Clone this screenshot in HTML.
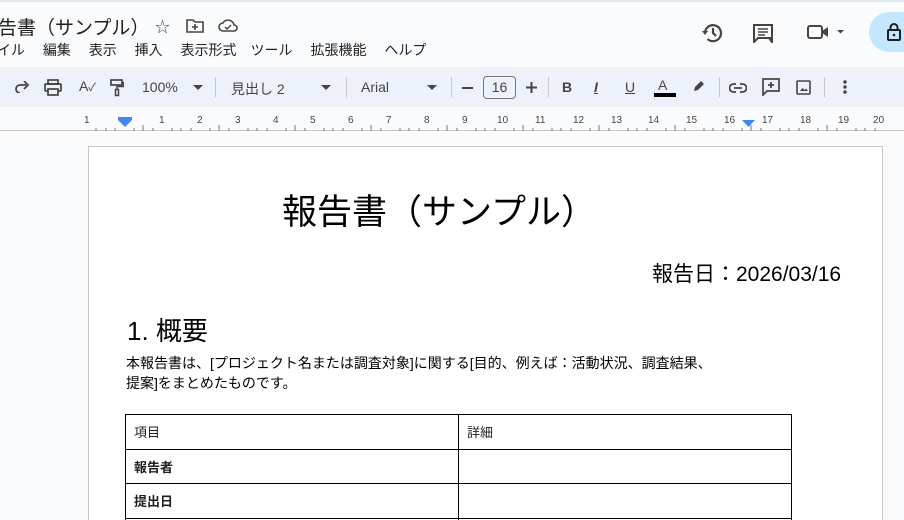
<!DOCTYPE html>
<html style="height:520px;overflow:hidden"><head><meta charset="utf-8"><style>
*{margin:0;padding:0;box-sizing:border-box}
body{width:904px;height:520px;overflow:hidden;background:#f9fbfd;font-family:"Liberation Sans","Noto Sans CJK JP",sans-serif;position:relative;color:#1f1f1f}
.a{position:absolute;white-space:nowrap}
.tb{position:absolute;left:0;top:67px;width:904px;height:40px;background:#edf2fa}
.sep{position:absolute;top:77px;width:1px;height:20px;background:#c7c7c7}
svg{position:absolute}
.page{position:absolute;left:88px;top:146px;width:795px;height:374px;background:#fff;border:1px solid #c7c7c7;border-bottom:none}
table{position:absolute;left:125px;top:414px;border-collapse:collapse;font-size:13px}
td{border:1px solid #000;height:34.5px;padding:0 8px;vertical-align:middle}
.r{font-size:10px;color:#444;position:absolute;top:115px}
</style></head><body>
<div style="position:absolute;left:0;top:0;width:904px;height:2px;background:#e3e7ee"></div>
<div class="a" style="left:-2px;top:13px;font-size:19px;color:#1f1f1f">告書（サンプル）</div>
<div class="a" style="left:155px;top:16px;font-size:15px;color:#444">☆</div>
<svg style="left:186px;top:18px" width="18" height="15" viewBox="0 0 18 15"><path d="M1 2h6l2 2h8v10H1z" fill="none" stroke="#444" stroke-width="1.6"/><path d="M9 6v6M6 9h6" stroke="#444" stroke-width="1.6"/></svg>
<svg style="left:218px;top:18px" width="20" height="14" viewBox="0 0 20 14"><path d="M5 13a4 4 0 0 1 0-8 6 6 0 0 1 11 2 3 3 0 0 1 0 6z" fill="none" stroke="#444" stroke-width="1.6"/><path d="M7 9l2 2 4-4" fill="none" stroke="#444" stroke-width="1.5"/></svg>
<div class="a" style="left:-3px;top:40px;font-size:14px;color:#1f1f1f">イル　 編集　 表示　 挿入　 表示形式　ツール　 拡張機能　 ヘルプ</div>
<svg style="left:701px;top:22px" width="24" height="22" viewBox="0 0 24 22"><path d="M4 11a8 8 0 1 1 2.5 6" fill="none" stroke="#444" stroke-width="2.2"/><path d="M1 9l3 4 3-4z" fill="#444"/><path d="M12 6v5l3 3" fill="none" stroke="#444" stroke-width="2.2"/></svg>
<svg style="left:752px;top:23px" width="22" height="20" viewBox="0 0 22 20"><path d="M2 2h18v13H6l-4 4z M20 15v4l-3-4" fill="none" stroke="#444" stroke-width="2"/><path d="M6 6h10M6 9h10M6 12h7" stroke="#444" stroke-width="1.6"/></svg>
<svg style="left:806px;top:23px" width="42" height="18" viewBox="0 0 42 18"><rect x="2" y="3" width="14" height="12" rx="2" fill="none" stroke="#444" stroke-width="2"/><path d="M16 8l6-4v10l-6-4" fill="#444"/><path d="M31 7h7l-3.5 3.5z" fill="#444"/></svg>
<div style="position:absolute;left:869px;top:12px;width:60px;height:40px;border-radius:20px;background:#c2e7ff"></div>
<svg style="left:887px;top:23px" width="14" height="18" viewBox="0 0 14 18"><rect x="1" y="7" width="12" height="10" rx="1" fill="none" stroke="#1f1f1f" stroke-width="2"/><path d="M3.5 7V4.5a3.5 3.5 0 0 1 7 0V7" fill="none" stroke="#1f1f1f" stroke-width="2"/><circle cx="7" cy="12" r="1.3" fill="#1f1f1f"/></svg>

<div class="tb"></div>
<svg style="left:14px;top:81px" width="16" height="12" viewBox="0 0 16 12"><path d="M12 4H6a4 4 0 0 0 0 8" fill="none" stroke="#444" stroke-width="1.8"/><path d="M10 0l4 4-4 4" fill="none" stroke="#444" stroke-width="1.8"/></svg>
<svg style="left:44px;top:79px" width="18" height="17" viewBox="0 0 18 17"><rect x="4" y="1" width="10" height="4" fill="none" stroke="#444" stroke-width="1.7"/><rect x="1" y="5" width="16" height="7" rx="1" fill="none" stroke="#444" stroke-width="1.7"/><rect x="4" y="10" width="10" height="6" fill="#edf2fa" stroke="#444" stroke-width="1.7"/></svg>
<div class="a" style="left:79px;top:78px;font-size:14px;color:#444">A<span style="font-size:11px">✓</span></div>
<svg style="left:110px;top:79px" width="14" height="18" viewBox="0 0 14 18"><rect x="1" y="1" width="11" height="5" fill="none" stroke="#444" stroke-width="1.7"/><path d="M12 3.5h1.5v4H7v3" fill="none" stroke="#444" stroke-width="1.5"/><rect x="5.5" y="10.5" width="3" height="6" fill="none" stroke="#444" stroke-width="1.5"/></svg>
<div class="a" style="left:142px;top:79px;font-size:14px;color:#444">100%</div>
<svg style="left:193px;top:85px" width="10" height="5"><path d="M0 0h10L5 5z" fill="#444"/></svg>
<div class="sep" style="left:215px"></div>
<div class="a" style="left:231px;top:79px;font-size:14px;color:#444">見出し 2</div>
<svg style="left:321px;top:85px" width="10" height="5"><path d="M0 0h10L5 5z" fill="#444"/></svg>
<div class="sep" style="left:346px"></div>
<div class="a" style="left:361px;top:79px;font-size:14px;color:#444">Arial</div>
<svg style="left:427px;top:85px" width="10" height="5"><path d="M0 0h10L5 5z" fill="#444"/></svg>
<div class="sep" style="left:451px"></div>
<div style="position:absolute;left:462px;top:87px;width:11px;height:2px;background:#444"></div>
<div style="position:absolute;left:483px;top:76px;width:33px;height:23px;border:1px solid #747775;border-radius:4px;font-size:14px;text-align:center;line-height:21px;color:#444">16</div>
<svg style="left:526px;top:82px" width="11" height="11"><path d="M5.5 0v11M0 5.5h11" stroke="#444" stroke-width="2"/></svg>
<div class="sep" style="left:548px"></div>
<div class="a" style="left:562px;top:79px;font-size:14px;font-weight:bold;color:#444">B</div>
<div class="a" style="left:594px;top:79px;font-size:14px;font-style:italic;font-weight:bold;color:#444;text-decoration:underline">I</div>
<div class="a" style="left:625px;top:79px;font-size:14px;color:#444;text-decoration:underline">U</div>
<div class="a" style="left:658px;top:77px;font-size:14px;color:#444">A</div>
<div style="position:absolute;left:654px;top:93px;width:22px;height:4px;background:#000"></div>
<svg style="left:692px;top:79px" width="14" height="14" viewBox="0 0 14 14"><path d="M2 12l1-4 6-6 3 3-6 6z" fill="#444"/></svg>
<div class="sep" style="left:719px"></div>
<svg style="left:729px;top:83px" width="18" height="10" viewBox="0 0 18 10"><path d="M7 1H4.5a4 4 0 0 0 0 8H7M11 1h2.5a4 4 0 0 1 0 8H11M5 5h8" fill="none" stroke="#444" stroke-width="1.8"/></svg>
<svg style="left:762px;top:78px" width="18" height="18" viewBox="0 0 18 18"><path d="M1 1h16v12H5l-4 4z" fill="none" stroke="#444" stroke-width="1.7"/><path d="M9 4v6M6 7h6" stroke="#444" stroke-width="1.7"/></svg>
<svg style="left:796px;top:80px" width="15" height="15" viewBox="0 0 15 15"><rect x="1" y="1" width="13" height="13" rx="1" fill="none" stroke="#444" stroke-width="1.6"/><path d="M4 11l2.5-3 2 2 1.5-1.5L12 11z" fill="#444"/></svg>
<div class="sep" style="left:824px"></div>
<svg style="left:843px;top:80px" width="4" height="14"><circle cx="2" cy="2" r="1.7" fill="#444"/><circle cx="2" cy="7" r="1.7" fill="#444"/><circle cx="2" cy="12" r="1.7" fill="#444"/></svg>

<div style="position:absolute;left:0;top:130px;width:904px;height:1px;background:#c7c7c7"></div>
<div class="r" style="left:84px">1</div>
<div class="r" style="left:159px">1</div><div class="r" style="left:197px">2</div><div class="r" style="left:235px">3</div><div class="r" style="left:273px">4</div><div class="r" style="left:310px">5</div><div class="r" style="left:348px">6</div><div class="r" style="left:386px">7</div><div class="r" style="left:424px">8</div><div class="r" style="left:462px">9</div><div class="r" style="left:497px">10</div><div class="r" style="left:535px">11</div><div class="r" style="left:573px">12</div><div class="r" style="left:611px">13</div><div class="r" style="left:648px">14</div><div class="r" style="left:686px">15</div><div class="r" style="left:724px">16</div><div class="r" style="left:762px">17</div><div class="r" style="left:800px">18</div><div class="r" style="left:838px">19</div><div class="r" style="left:873px">20</div>
<svg style="left:0;top:124px" width="904" height="7">
<path d="M96 4v3M106 4v3M115 4v3M134 4v3M143 4v3M153 4v3M172 4v3M181 4v3M191 4v3M210 4v3M219 4v3M229 4v3M248 4v3M257 4v3M267 4v3M286 4v3M295 4v3M305 4v3M324 4v3M333 4v3M343 4v3M362 4v3M371 4v3M381 4v3M400 4v3M409 4v3M419 4v3M438 4v3M447 4v3M457 4v3M476 4v3M485 4v3M495 4v3M514 4v3M523 4v3M533 4v3M552 4v3M561 4v3M571 4v3M590 4v3M599 4v3M609 4v3M628 4v3M637 4v3M647 4v3M666 4v3M675 4v3M685 4v3M704 4v3M713 4v3M723 4v3M742 4v3M751 4v3M761 4v3M780 4v3M789 4v3M799 4v3M818 4v3M827 4v3M837 4v3M856 4v3M865 4v3M875 4v3" stroke="#777" stroke-width="1"/>
<path d="M143 1v6M219 1v6M295 1v6M371 1v6M447 1v6M523 1v6M599 1v6M675 1v6M751 1v6M827 1v6" stroke="#777"/>
</svg>
<div style="position:absolute;left:118px;top:117px;width:14px;height:3px;background:#4285f4"></div>
<svg style="left:118px;top:120px" width="14" height="8"><path d="M0 0h14L7 7z" fill="#4285f4"/></svg>
<svg style="left:742px;top:120px" width="13" height="8"><path d="M0 0h13L6.5 7z" fill="#4285f4"/></svg>

<div class="page"></div>
<div class="a" style="left:282px;top:184px;font-size:35px;color:#000">報告書（サンプル）</div>
<div class="a" style="left:652px;top:258px;font-size:21px;color:#000">報告日：2026/03/16</div>
<div class="a" style="left:127px;top:311px;font-size:26px;color:#000">1. 概要</div>
<div class="a" style="left:126px;top:353px;font-size:14px;line-height:20px;color:#000">本報告書は、[プロジェクト名または調査対象]に関する[目的、例えば：活動状況、調査結果、<br>提案]をまとめたものです。</div>
<table>
<tr><td style="width:333px">項目</td><td style="width:333px">詳細</td></tr>
<tr><td style="font-weight:bold">報告者</td><td></td></tr>
<tr><td style="font-weight:bold">提出日</td><td></td></tr>
</table>
<div style="position:absolute;left:125px;top:517px;width:1px;height:3px;background:#000"></div>
<div style="position:absolute;left:458px;top:517px;width:1px;height:3px;background:#000"></div>
<div style="position:absolute;left:791px;top:517px;width:1px;height:3px;background:#000"></div>
</body></html>
